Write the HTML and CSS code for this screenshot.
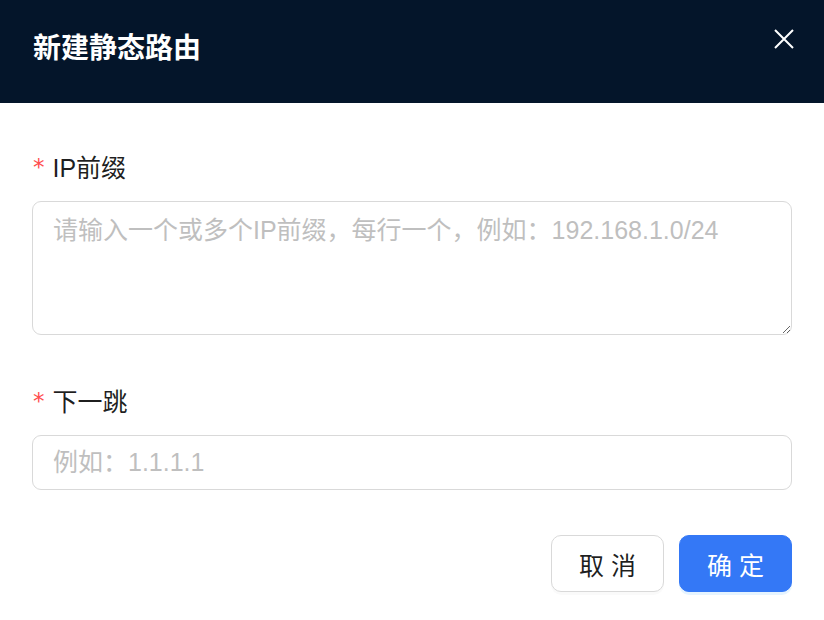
FILE: index.html
```html
<!DOCTYPE html>
<html lang="zh-CN">
<head>
<meta charset="utf-8">
<title>新建静态路由</title>
<link rel="stylesheet" href="styles.css">
</head>
<body>
<div class="modal">
  <div class="modal-header">
    <div class="modal-title">新建静态路由</div>
    <button class="modal-close" aria-label="关闭">
      <svg width="22" height="22" viewBox="0 0 22 22"><path d="M2 2 L20 20 M20 2 L2 20" stroke="#ffffff" stroke-width="2" stroke-linecap="butt" fill="none"/></svg>
    </button>
  </div>
  <form class="modal-body">
    <div class="form-item">
      <label class="form-label"><span class="req">*</span>IP前缀</label>
      <textarea class="textarea" placeholder="请输入一个或多个IP前缀，每行一个，例如：192.168.1.0/24"></textarea>
    </div>
    <div class="form-item form-item-2">
      <label class="form-label"><span class="req">*</span>下一跳</label>
      <input class="input" type="text" placeholder="例如：1.1.1.1">
    </div>
    <div class="modal-footer">
      <button type="button" class="btn">取 消</button>
      <button type="button" class="btn btn-primary">确 定</button>
    </div>
  </form>
</div>
</body>
</html>
```

FILE: styles.css
```css
* { box-sizing: border-box; }
html, body { margin: 0; padding: 0; background: #ffffff; }
body {
  font-family: "Liberation Sans", "Noto Sans CJK SC", sans-serif;
  color: rgba(0, 0, 0, 0.88);
}
.modal { width: 824px; height: 620px; background: #fff; }
.modal-header {
  height: 103px;
  background: #04152a;
  display: flex;
  align-items: flex-start;
  justify-content: space-between;
  padding: 28px 29px 0 33px;
}
.modal-title {
  color: #ffffff;
  font-size: 28px;
  font-weight: 600;
  line-height: 36px;
  font-family: "Noto Sans CJK SC", "Liberation Sans", sans-serif;
}
.modal-close {
  background: none;
  border: 0;
  padding: 0;
  width: 22px;
  height: 22px;
  line-height: 0;
}
.modal-body {
  padding: 48px 32px 0 32px;
  display: flex;
  flex-direction: column;
}
.form-item { display: flex; flex-direction: column; }
.form-item-2 { margin-top: 50px; }
.form-label {
  font-size: 25px;
  line-height: 34px;
  color: rgba(0, 0, 0, 0.88);
  margin-bottom: 16px;
  padding-left: 1px;
  display: flex;
  align-items: center;
}
.req {
  color: #ff4d4f;
  font-family: "DejaVu Sans", sans-serif;
  font-size: 23px;
  margin-right: 8px;
  position: relative;
  top: -1px;
}
.textarea, .input {
  width: 100%;
  border: 1px solid #d9d9d9;
  border-radius: 9px;
  font-family: "Liberation Sans", "Noto Sans CJK SC", sans-serif;
  font-size: 25px;
  color: rgba(0, 0, 0, 0.88);
  padding: 0 20px;
  outline: none;
  background: #fff;
}
.textarea {
  height: 134px;
  line-height: 36px;
  padding-top: 10px;
  resize: vertical;
}
.input {
  height: 55px;
  line-height: 36px;
}
.textarea::placeholder, .input::placeholder { color: #bfbfbf; }
.modal-footer {
  margin-top: 45px;
  display: flex;
  justify-content: flex-end;
  gap: 15px;
}
.btn {
  width: 113px;
  height: 57px;
  border: 1px solid #d9d9d9;
  border-radius: 10px;
  background: #fff;
  font-family: "Liberation Sans", "Noto Sans CJK SC", sans-serif;
  font-size: 25px;
  color: rgba(0, 0, 0, 0.88);
  box-shadow: 0 3px 0 rgba(0, 0, 0, 0.02);
  padding: 0;
}
.btn-primary {
  background: #3478f6;
  border-color: #3478f6;
  color: #ffffff;
  box-shadow: 0 3px 0 rgba(5, 145, 255, 0.1);
}
```
